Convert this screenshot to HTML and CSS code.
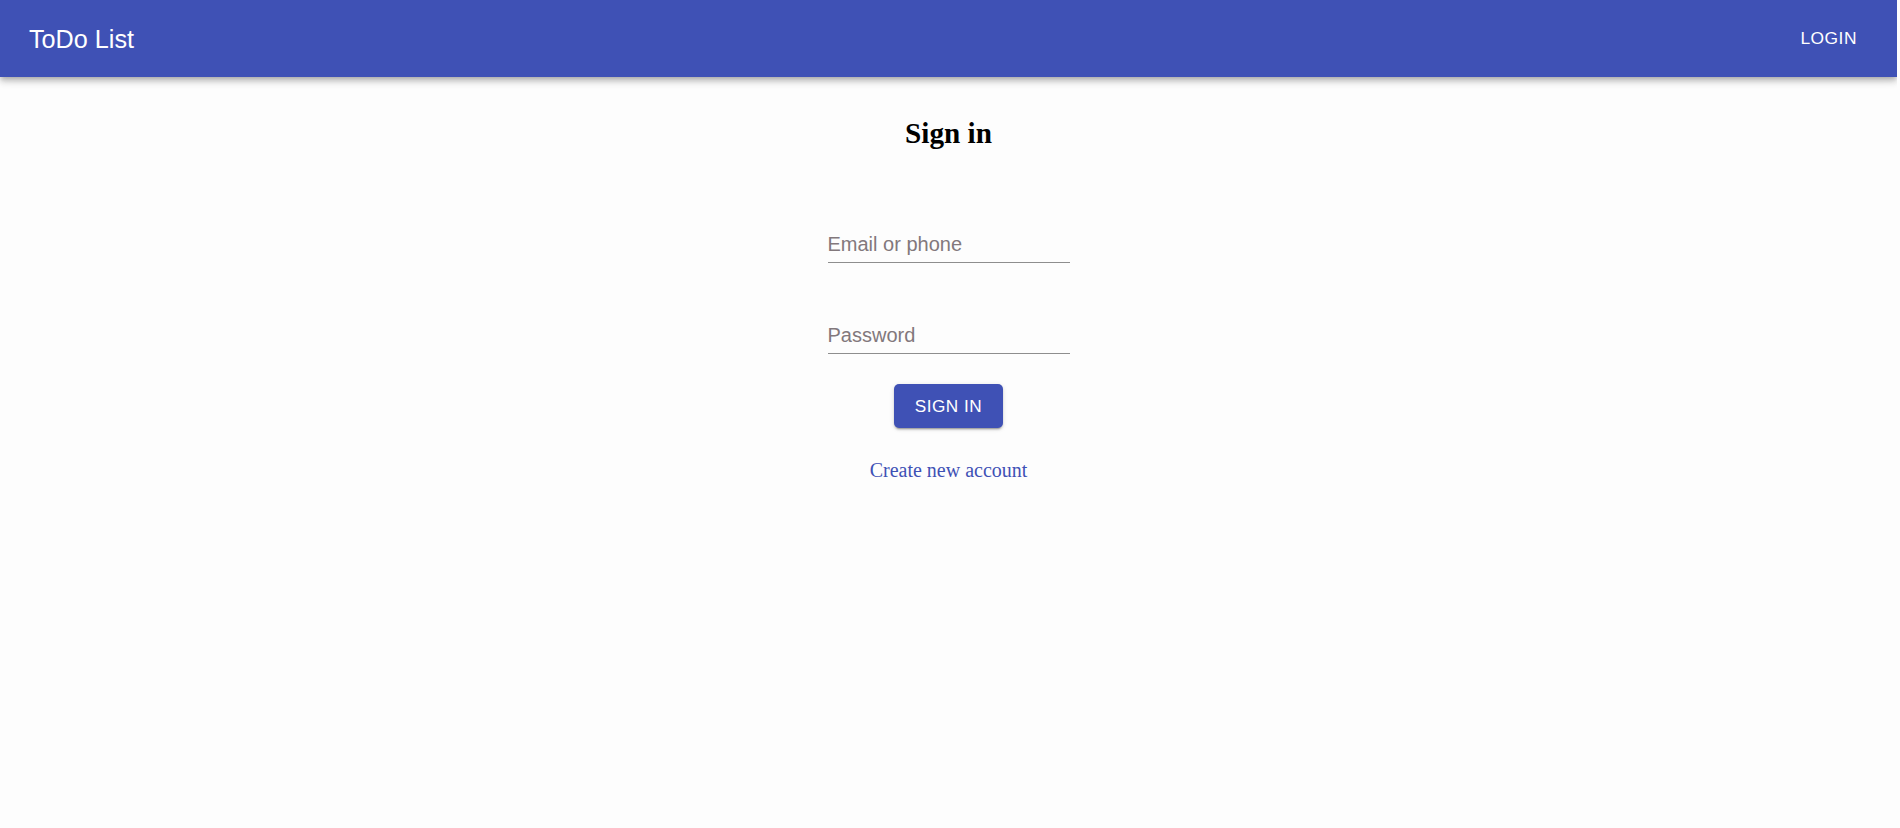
FILE: index.html
```html
<!DOCTYPE html>
<html lang="en">
<head>
<meta charset="utf-8">
<title>ToDo List</title>
<link rel="stylesheet" href="styles.css">
</head>
<body>
<header class="appbar">
  <div class="appbar-title">ToDo List</div>
  <button class="appbar-btn" type="button">Login</button>
</header>
<main class="signin">
  <h2 class="signin-title">Sign in</h2>
  <form class="signin-form">
    <div class="field field-email">
      <input class="field-input" type="text" placeholder="Email or phone">
    </div>
    <div class="field field-password">
      <input class="field-input" type="password" placeholder="Password">
    </div>
    <button class="signin-btn" type="button">Sign in</button>
    <a class="signin-link" href="#">Create new account</a>
  </form>
</main>
</body>
</html>
```
FILE: styles.css
```css
html, body {
  margin: 0;
  padding: 0;
  background: #fdfdfd;
}
body {
  margin-right: 3px;
  font-family: "Liberation Serif", "Times New Roman", serif;
}
.appbar {
  height: 77px;
  box-sizing: border-box;
  background: #3f51b5;
  color: #fff;
  display: flex;
  align-items: center;
  justify-content: space-between;
  padding: 0 30px 0 29px;
  box-shadow: 0 2px 5px -1px rgba(0,0,0,0.2), 0 5px 6px 0 rgba(0,0,0,0.14), 0 1px 12px 0 rgba(0,0,0,0.12);
  position: relative;
  z-index: 1;
}
.appbar-title {
  font-family: "Liberation Sans", Arial, sans-serif;
  font-size: 25.2px;
  line-height: 30px;
  padding-top: 1px;
}
.appbar-btn {
  background: transparent;
  border: 0;
  color: #fff;
  font-family: "Liberation Sans", Arial, sans-serif;
  font-size: 17.4px;
  font-weight: 400;
  letter-spacing: 0.5px;
  text-transform: uppercase;
  padding: 0 10px;
  height: 45px;
  line-height: 45px;
  cursor: pointer;
}
.signin {
  display: flex;
  flex-direction: column;
  align-items: center;
}
.signin-title {
  margin: 39px 0 0;
  font-size: 29.2px;
  line-height: 34px;
  font-weight: bold;
  color: #000;
}
.signin-form {
  display: flex;
  flex-direction: column;
  align-items: center;
  margin-top: 76px;
}
.field {
  width: 242px;
  border-bottom: 1px solid #8e8e8e;
}
.field-password {
  margin-top: 54px;
}
.field-input {
  display: block;
  width: 100%;
  box-sizing: content-box;
  height: 24px;
  padding: 6px 0 6px;
  border: 0;
  outline: none;
  background: transparent;
  font-family: "Liberation Sans", Arial, sans-serif;
  font-size: 20px;
  line-height: 24px;
  color: #222;
}
.field-input::placeholder {
  color: #82787c;
  opacity: 1;
}
.signin-btn {
  margin-top: 30px;
  height: 44px;
  padding: 0 20.5px;
  border: 0;
  border-radius: 5px;
  background: #3f51b5;
  color: #fff;
  font-family: "Liberation Sans", Arial, sans-serif;
  font-size: 17.2px;
  letter-spacing: 0.5px;
  text-transform: uppercase;
  line-height: 44px;
  box-shadow: 0 3px 1px -2px rgba(0,0,0,0.2), 0 2px 2px 0 rgba(0,0,0,0.14), 0 1px 5px 0 rgba(0,0,0,0.12);
  cursor: pointer;
}
.signin-link {
  margin-top: 30px;
  font-size: 20px;
  line-height: 24px;
  color: #3f51b5;
  text-decoration: none;
}
```
